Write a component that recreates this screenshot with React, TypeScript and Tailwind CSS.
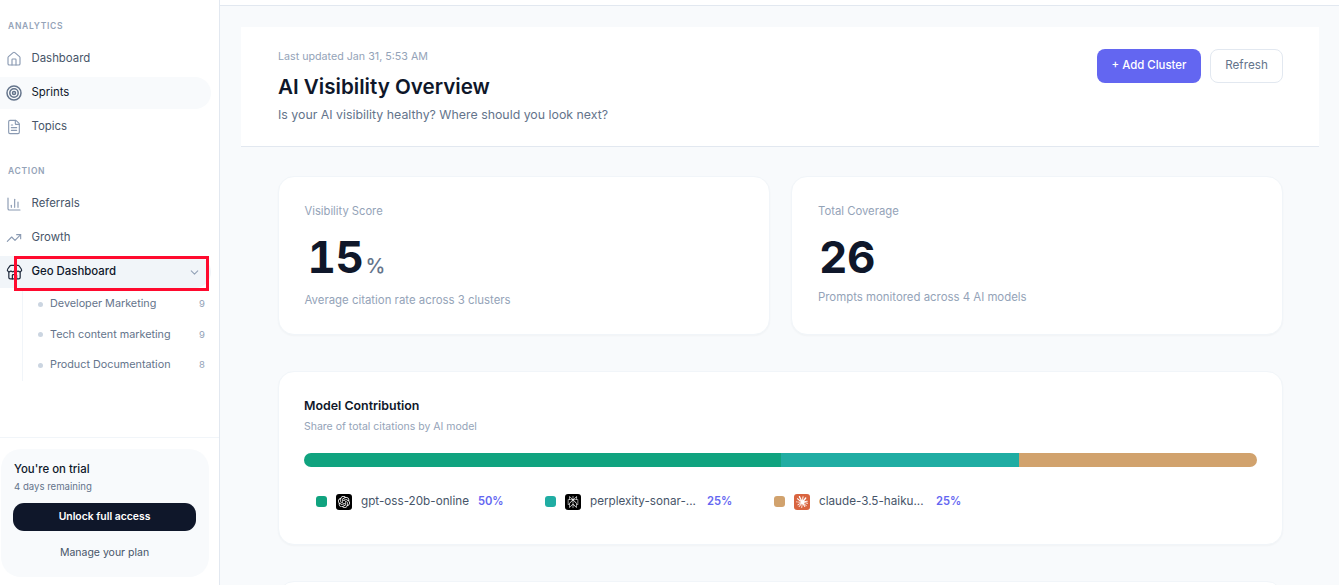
import React from "react";
import { Home, FileText, BarChart3, TrendingUp, ChevronDown, Store } from "lucide-react";
import { SiOpenai, SiPerplexity, SiClaude } from "react-icons/si";

function Target() {
  return (
    <svg width="16" height="16" viewBox="0 0 16 16" fill="none" stroke="#64748b" strokeWidth="1.5">
      <circle cx="8" cy="8" r="7" />
      <circle cx="8" cy="8" r="4.2" />
      <circle cx="8" cy="8" r="1.5" />
    </svg>
  );
}

function NavItem({ icon, label, active }: { icon: React.ReactNode; label: string; active?: boolean }) {
  return (
    <div className={`flex h-8 w-[211px] items-center gap-[8.5px] rounded-r-2xl pl-[5px] text-[11.4px] ${active ? "bg-[#f8fafc] text-[#0f172a]" : "text-[#475569]"}`}>
      <span className="flex w-[18px] justify-center">{icon}</span>
      <span>{label}</span>
    </div>
  );
}

function SubItem({ label, n }: { label: string; n: number }) {
  return (
    <div className="flex h-[30.5px] items-center pl-[15px] pr-[7px] text-[10.8px] text-[#64748b]">
      <span className="mr-[7px] h-[5px] w-[5px] rounded-full bg-[#cbd5e1]" />
      <span className="flex-1">{label}</span>
      <span className="text-[9.5px] text-[#94a3b8]">{n}</span>
    </div>
  );
}

function Logo({ bg, children }: { bg: string; children: React.ReactNode }) {
  return <span className={`flex h-4 w-4 items-center justify-center rounded-[3px] ${bg}`}>{children}</span>;
}

export default function App() {
  return (
    <div className="relative flex h-[585px] w-[1339px] overflow-hidden bg-[#f8fafc] font-['Inter',sans-serif]">
      <aside className="flex h-full w-[220px] shrink-0 flex-col border-r border-[#e2e8f0] bg-white">
        <div className="flex-1">
          <div className="pl-2 pt-[21px] text-[8.5px] font-semibold leading-[10px] tracking-[0.7px] text-[#94a3b8]">ANALYTICS</div>
          <div className="mt-[12px] flex flex-col gap-[2px]">
            <NavItem icon={<Home size={16} color="#8a9ab2" strokeWidth={1.7} />} label="Dashboard" />
            <NavItem icon={<Target />} label="Sprints" active />
            <NavItem icon={<FileText size={16} color="#8a9ab2" strokeWidth={1.7} />} label="Topics" />
          </div>
          <div className="mt-[23px] pl-2 text-[8.5px] font-semibold leading-[10px] tracking-[0.7px] text-[#94a3b8]">ACTION</div>
          <div className="mt-[12px] flex flex-col gap-[2px]">
            <NavItem icon={<BarChart3 size={16} color="#8a9ab2" strokeWidth={1.7} />} label="Referrals" />
            <NavItem icon={<TrendingUp size={16} color="#8a9ab2" strokeWidth={1.7} />} label="Growth" />
            <div className="flex h-8 w-[211px] items-center gap-[8.5px] rounded-r-2xl bg-[#f1f5f9] pl-[5px] pr-[10px] text-[11.4px] font-medium text-[#0f172a]">
              <span className="flex w-[18px] justify-center"><Store size={17} color="#1e293b" strokeWidth={1.7} /></span>
              <span className="flex-1">Geo Dashboard</span>
              <ChevronDown size={13} color="#94a3b8" />
            </div>
          </div>
          <div className="ml-[22px] mt-[1px] w-[190px] border-l border-[#f1f5f9]">
            <SubItem label="Developer Marketing" n={9} />
            <SubItem label="Tech content marketing" n={9} />
            <SubItem label="Product Documentation" n={8} />
          </div>
        </div>
        <div className="border-t border-[#f1f5f9] pl-[1px] pt-[11px] pb-2">
          <div className="h-[128px] w-[208px] rounded-[20px] bg-[#f8fafc] pl-[12px] pr-[13px] pt-[12px]">
            <div className="pl-[1px] text-[11.4px] font-medium leading-[16px] text-[#0f172a]">You're on trial</div>
            <div className="mt-[4px] pl-[1px] text-[9.6px] leading-[12px] text-[#64748b]">4 days remaining</div>
            <div className="mt-[10px] flex h-[28px] items-center justify-center rounded-[11px] bg-[#0f172a] text-[10.4px] font-semibold text-white">Unlock full access</div>
            <div className="mt-[15px] text-center text-[10.5px] leading-[14px] text-[#475569]">Manage your plan</div>
          </div>
        </div>
      </aside>

      <main className="min-w-0 flex-1">
        <div className="h-[6px] border-b border-[#e2e8f0] bg-white" />
        <div className="ml-[21px] mr-[20px] mt-[21px] flex h-[120px] items-start justify-between border-b border-[#e2e8f0] bg-white pl-[37px] pr-[36px] pt-[22px]">
          <div>
            <div className="pt-[1px] text-[10.7px] leading-[14px] text-[#94a3b8]">Last updated Jan 31, 5:53 AM</div>
            <h1 className="mt-[8px] text-[20.6px] font-semibold leading-[30px] text-[#0f172a]">AI Visibility Overview</h1>
            <div className="mt-[5px] text-[12.35px] leading-[16px] text-[#64748b]">Is your AI visibility healthy? Where should you look next?</div>
          </div>
          <div className="flex gap-[9px]">
            <div className="flex h-[34px] w-[104px] items-center justify-center rounded-[8px] bg-[#6366f1] pb-[1px] text-[11.4px] font-medium text-white">+ Add Cluster</div>
            <div className="flex h-[34px] w-[73px] items-center justify-center rounded-[8px] border border-[#e2e8f0] bg-white pb-[1px] text-[11.7px] text-[#64748b]">Refresh</div>
          </div>
        </div>

        <div className="ml-[58px] mr-[56px]">
          <div className="mt-[29px] grid grid-cols-2 gap-[21px]">
            <div className="h-[159px] rounded-[16px] border border-[#f1f5f9] bg-white pl-[25.5px] pt-[27px] shadow-[0_1px_2px_rgba(15,23,42,0.03)]">
              <div className="text-[11.2px] leading-[14px] text-[#94a3b8]">Visibility Score</div>
              <div className="mt-[14px] flex items-baseline pl-[3px]">
                <span className="text-[44px] font-bold leading-[50px] tracking-[-0.5px] tabular-nums text-[#0f172a]">15</span>
                <span className="ml-[2px] text-[20px] font-medium text-[#64748b]">%</span>
              </div>
              <div className="mt-[11px] text-[11.4px] leading-[14px] text-[#94a3b8]">Average citation rate across 3 clusters</div>
            </div>
            <div className="h-[159px] rounded-[16px] border border-[#f1f5f9] bg-white pl-[26px] pt-[27px] shadow-[0_1px_2px_rgba(15,23,42,0.03)]">
              <div className="text-[11.3px] leading-[14px] text-[#94a3b8]">Total Coverage</div>
              <div className="mt-[14px] pl-[1px] text-[44px] font-bold leading-[50px] tracking-[-0.5px] tabular-nums text-[#0f172a]">26</div>
              <div className="mt-[8px] text-[11.4px] leading-[14px] text-[#94a3b8]">Prompts monitored across 4 AI models</div>
            </div>
          </div>

          <div className="mt-[36px] h-[174px] rounded-[16px] border border-[#f1f5f9] bg-white px-[25px] pt-[26px] shadow-[0_1px_2px_rgba(15,23,42,0.03)]">
            <div className="text-[12.4px] font-semibold leading-[16px] text-[#0f172a]">Model Contribution</div>
            <div className="mt-[6px] text-[10.5px] leading-[14px] text-[#94a3b8]">Share of total citations by AI model</div>
            <div className="mt-[19px] flex h-[14px] overflow-hidden rounded-full">
              <div className="w-1/2 bg-[#10a37f]" />
              <div className="w-1/4 bg-[#20ada3]" />
              <div className="w-1/4 bg-[#d1a26d]" />
            </div>
            <div className="mt-[26px] flex pl-[12px]">
              <div className="flex w-[229px] items-center">
                <span className="mr-[9px] h-[11px] w-[11px] rounded-[3px] bg-[#10a37f]" />
                <Logo bg="bg-black"><SiOpenai size={12} color="#fff" /></Logo>
                <span className="ml-[9px] whitespace-nowrap text-[11.7px] text-[#475569]">gpt-oss-20b-online</span>
                <span className="ml-[9px] text-[11.2px] font-semibold text-[#6366f1]">50%</span>
              </div>
              <div className="flex w-[229px] items-center">
                <span className="mr-[9px] h-[11px] w-[11px] rounded-[3px] bg-[#20ada3]" />
                <Logo bg="bg-black"><SiPerplexity size={12} color="#fff" /></Logo>
                <span className="ml-[9px] w-[108px] whitespace-nowrap text-[11.7px] text-[#475569]">perplexity-sonar-...</span>
                <span className="ml-[9px] text-[11.2px] font-semibold text-[#6366f1]">25%</span>
              </div>
              <div className="flex w-[229px] items-center">
                <span className="mr-[9px] h-[11px] w-[11px] rounded-[3px] bg-[#d1a26d]" />
                <Logo bg="bg-[#d9643f]"><SiClaude size={12} color="#fff" /></Logo>
                <span className="ml-[9px] w-[108px] whitespace-nowrap text-[11.7px] text-[#475569]">claude-3.5-haiku...</span>
                <span className="ml-[9px] text-[11.2px] font-semibold text-[#6366f1]">25%</span>
              </div>
            </div>
          </div>

          <div className="mt-[36px] h-[100px] rounded-[16px] border border-[#f1f5f9] bg-white" />
        </div>
      </main>

      <div className="pointer-events-none absolute left-[14px] top-[256px] h-[35px] w-[195px] border-[3px] border-[#ff0a2e]" />
    </div>
  );
}
